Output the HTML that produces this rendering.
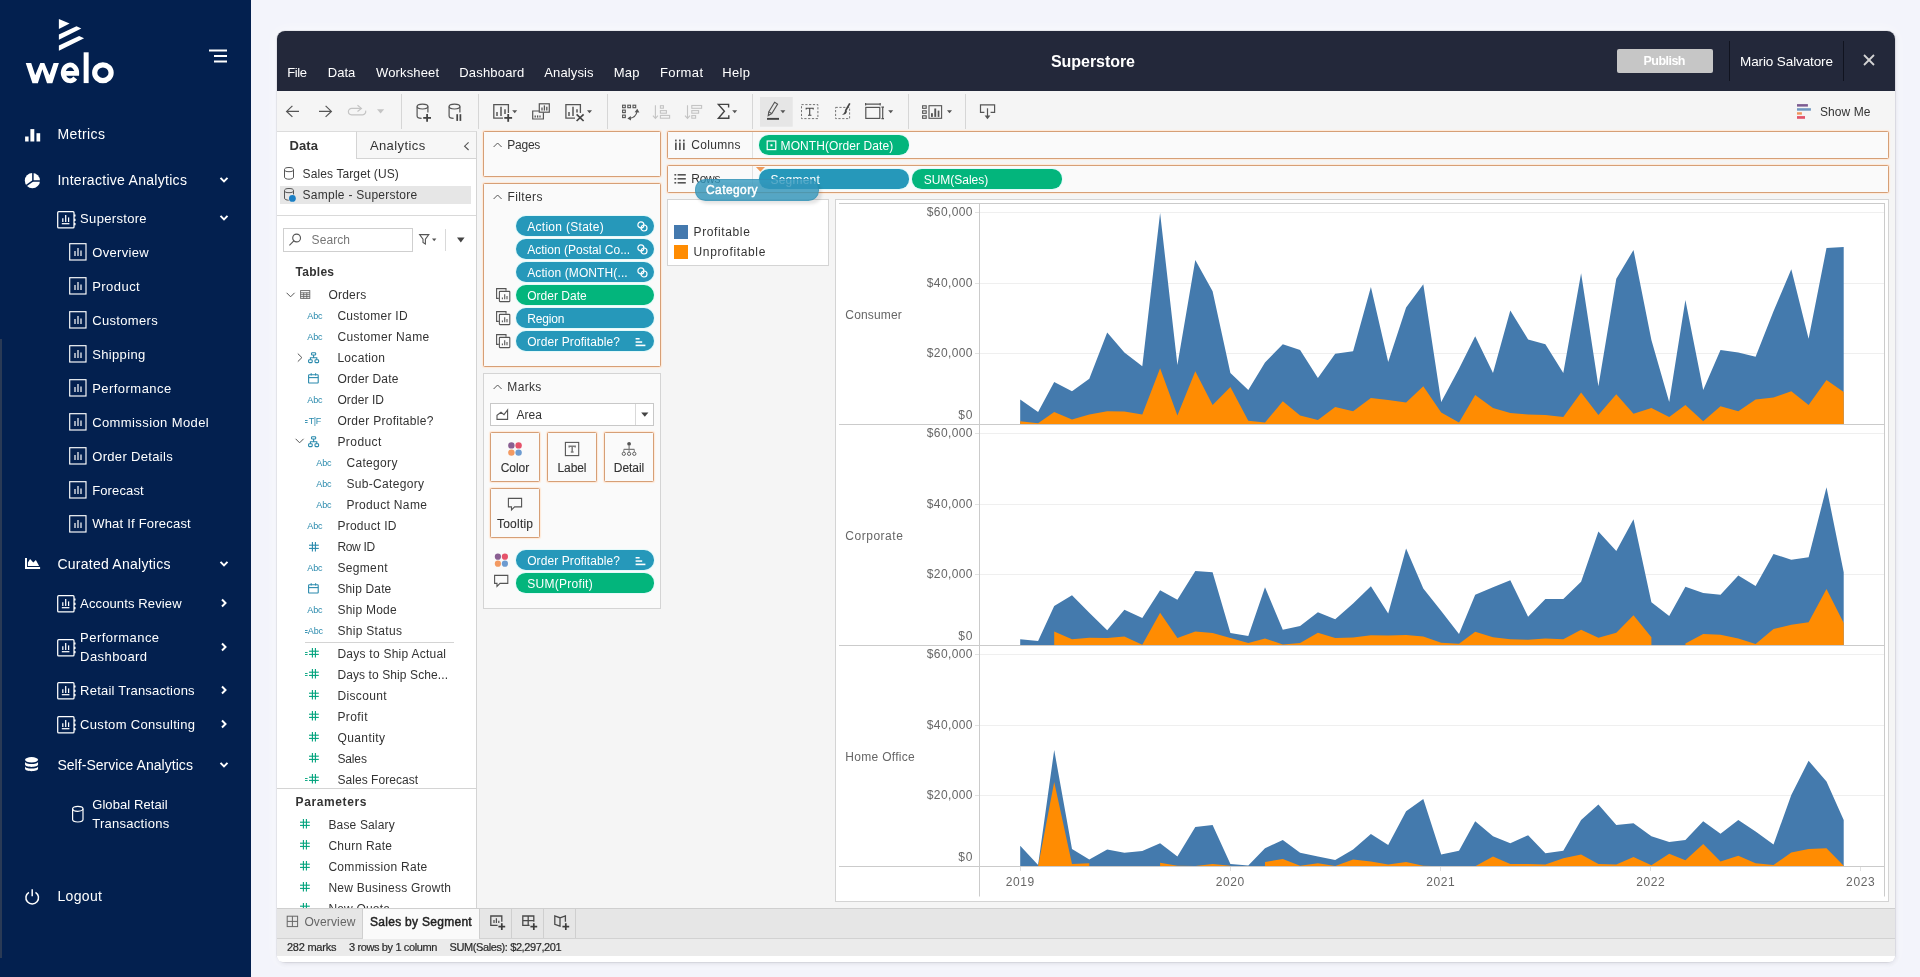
<!DOCTYPE html>
<html><head><meta charset="utf-8"><title>Superstore</title>
<style>
html,body{margin:0;padding:0;}
body{width:1920px;height:977px;overflow:hidden;position:relative;background:#f3f4fb;font-family:"Liberation Sans",sans-serif;}
.b{position:absolute;box-sizing:border-box;display:block;}
.t{position:absolute;white-space:nowrap;display:block;}
svg{overflow:visible;}
</style></head><body><div id="root" style="position:absolute;left:0;top:0;width:1920px;height:977px;will-change:transform;">
<div class="b" style="left:0px;top:0px;width:251px;height:977px;background:#03204f;"></div>
<div class="b" style="left:0px;top:339px;width:2px;height:619px;background:#2a3a55;"></div>
<svg class="b" style="left:0px;top:0px;" width="251" height="100" viewBox="0 0 251 100"><g fill="#fff">
<polygon points="58.9,19 69.6,23.6 58.9,29"/>
<polygon points="58.9,34.6 76.5,26.2 81.3,28.4 58.9,39.7"/>
<polygon points="58.9,45.4 79.1,36 84.1,38.3 58.9,50.8"/>
</g>
<defs><clipPath id="wclip"><rect x="20" y="62.4" width="45" height="20.7"/></clipPath></defs>
<g fill="none" stroke="#fff">
<polygon points="25.73,63.07 31.22,63.07 35.23,75.36 40.31,63.07 44.32,63.07 49.40,75.36 53.58,63.07 58.90,63.07 52.35,83.14 47.03,83.14 42.36,69.13 37.85,83.14 32.45,83.14" fill="#fff" stroke="none"/>
<path d="M63.2,73.3 H76.8 A6.8,7.9 0 1 0 75.2,78" stroke-width="4.7"/>
<line x1="86.15" y1="52.3" x2="86.15" y2="83.1" stroke-width="5"/>
<ellipse cx="102.9" cy="72.7" rx="8.2" ry="7.85" stroke-width="5.2"/>
</g></svg>
<svg class="b" style="left:0px;top:0px;" width="251" height="100" viewBox="0 0 251 100"><g stroke="#fff" stroke-width="2"><line x1="209" y1="50.5" x2="227" y2="50.5"/><line x1="214" y1="56" x2="227" y2="56"/><line x1="214" y1="61.5" x2="227" y2="61.5"/></g></svg>
<svg class="b" style="left:25px;top:128px;" width="16" height="14" viewBox="0 0 16 14"><g fill="#fff"><rect x="0.1" y="8.5" width="3.5" height="5"/><rect x="5.4" y="1.1" width="3.9" height="12.4"/><rect x="11.5" y="5.2" width="3.7" height="8.3"/></g></svg>
<span class="t" style="left:57.40px;top:125.00px;font-size:14px;line-height:18px;color:#fff;letter-spacing:0.415px;">Metrics</span>
<svg class="b" style="left:24px;top:172px;" width="18" height="18" viewBox="0 0 18 18"><circle cx="8.4" cy="8.7" r="7.6" fill="#fff"/><g stroke="#03204f" stroke-width="1.5" fill="none"><polyline points="8.9,0.5 8.9,8.9 16.5,8.9"/><line x1="8.9" y1="8.9" x2="2.2" y2="13.6"/></g></svg>
<span class="t" style="left:57.40px;top:171.00px;font-size:14px;line-height:18px;color:#fff;letter-spacing:0.289px;">Interactive Analytics</span>
<svg class="b" style="left:218.3px;top:175.6px;" width="12" height="8" viewBox="0 0 12 8"><polyline points="2.5,1.9 6,5.4 9.5,1.9" fill="none" stroke="#fff" stroke-width="2"/></svg>
<svg class="b" style="left:56.8px;top:211px;" width="20" height="18" viewBox="0 0 20 18"><rect x="0.7" y="0.7" width="16.3" height="16.2" rx="1" fill="none" stroke="#fff" stroke-width="1.25"/><g stroke="#fff" stroke-width="1.25"><line x1="5.8" y1="7.3" x2="5.8" y2="11"/><line x1="8.7" y1="4" x2="8.7" y2="11"/><line x1="11.6" y1="6.4" x2="11.6" y2="11"/><line x1="4.8" y1="12.7" x2="12.4" y2="12.7"/></g><g stroke="#fff" stroke-width="1.5"><line x1="17.8" y1="3.4" x2="17.8" y2="5.6"/><line x1="17.8" y1="7.7" x2="17.8" y2="9.9"/><line x1="17.8" y1="12" x2="17.8" y2="14.2"/></g></svg>
<span class="t" style="left:80.10px;top:211.00px;font-size:13px;line-height:16px;color:#fff;letter-spacing:0.324px;">Superstore</span>
<svg class="b" style="left:218.3px;top:214.4px;" width="12" height="8" viewBox="0 0 12 8"><polyline points="2.5,1.9 6,5.4 9.5,1.9" fill="none" stroke="#fff" stroke-width="2"/></svg>
<svg class="b" style="left:68.9px;top:243.3px;" width="18" height="18" viewBox="0 0 18 18"><rect x="0.7" y="0.7" width="16.3" height="16.3" fill="none" stroke="#fff" stroke-width="1.15"/><g stroke="#fff" stroke-width="1.2"><line x1="6" y1="8" x2="6" y2="13"/><line x1="9" y1="5" x2="9" y2="13"/><line x1="12" y1="7.5" x2="12" y2="13"/></g></svg>
<span class="t" style="left:92.20px;top:245.00px;font-size:13px;line-height:16px;color:#fff;letter-spacing:0.332px;">Overview</span>
<svg class="b" style="left:68.9px;top:277.3px;" width="18" height="18" viewBox="0 0 18 18"><rect x="0.7" y="0.7" width="16.3" height="16.3" fill="none" stroke="#fff" stroke-width="1.15"/><g stroke="#fff" stroke-width="1.2"><line x1="6" y1="8" x2="6" y2="13"/><line x1="9" y1="5" x2="9" y2="13"/><line x1="12" y1="7.5" x2="12" y2="13"/></g></svg>
<span class="t" style="left:92.20px;top:279.00px;font-size:13px;line-height:16px;color:#fff;letter-spacing:0.450px;">Product</span>
<svg class="b" style="left:68.9px;top:311.3px;" width="18" height="18" viewBox="0 0 18 18"><rect x="0.7" y="0.7" width="16.3" height="16.3" fill="none" stroke="#fff" stroke-width="1.15"/><g stroke="#fff" stroke-width="1.2"><line x1="6" y1="8" x2="6" y2="13"/><line x1="9" y1="5" x2="9" y2="13"/><line x1="12" y1="7.5" x2="12" y2="13"/></g></svg>
<span class="t" style="left:92.20px;top:313.00px;font-size:13px;line-height:16px;color:#fff;letter-spacing:0.332px;">Customers</span>
<svg class="b" style="left:68.9px;top:345.3px;" width="18" height="18" viewBox="0 0 18 18"><rect x="0.7" y="0.7" width="16.3" height="16.3" fill="none" stroke="#fff" stroke-width="1.15"/><g stroke="#fff" stroke-width="1.2"><line x1="6" y1="8" x2="6" y2="13"/><line x1="9" y1="5" x2="9" y2="13"/><line x1="12" y1="7.5" x2="12" y2="13"/></g></svg>
<span class="t" style="left:92.20px;top:347.00px;font-size:13px;line-height:16px;color:#fff;letter-spacing:0.344px;">Shipping</span>
<svg class="b" style="left:68.9px;top:379.3px;" width="18" height="18" viewBox="0 0 18 18"><rect x="0.7" y="0.7" width="16.3" height="16.3" fill="none" stroke="#fff" stroke-width="1.15"/><g stroke="#fff" stroke-width="1.2"><line x1="6" y1="8" x2="6" y2="13"/><line x1="9" y1="5" x2="9" y2="13"/><line x1="12" y1="7.5" x2="12" y2="13"/></g></svg>
<span class="t" style="left:92.20px;top:381.00px;font-size:13px;line-height:16px;color:#fff;letter-spacing:0.459px;">Performance</span>
<svg class="b" style="left:68.9px;top:413.3px;" width="18" height="18" viewBox="0 0 18 18"><rect x="0.7" y="0.7" width="16.3" height="16.3" fill="none" stroke="#fff" stroke-width="1.15"/><g stroke="#fff" stroke-width="1.2"><line x1="6" y1="8" x2="6" y2="13"/><line x1="9" y1="5" x2="9" y2="13"/><line x1="12" y1="7.5" x2="12" y2="13"/></g></svg>
<span class="t" style="left:92.20px;top:415.00px;font-size:13px;line-height:16px;color:#fff;letter-spacing:0.398px;">Commission Model</span>
<svg class="b" style="left:68.9px;top:447.3px;" width="18" height="18" viewBox="0 0 18 18"><rect x="0.7" y="0.7" width="16.3" height="16.3" fill="none" stroke="#fff" stroke-width="1.15"/><g stroke="#fff" stroke-width="1.2"><line x1="6" y1="8" x2="6" y2="13"/><line x1="9" y1="5" x2="9" y2="13"/><line x1="12" y1="7.5" x2="12" y2="13"/></g></svg>
<span class="t" style="left:92.20px;top:449.00px;font-size:13px;line-height:16px;color:#fff;letter-spacing:0.327px;">Order Details</span>
<svg class="b" style="left:68.9px;top:481.3px;" width="18" height="18" viewBox="0 0 18 18"><rect x="0.7" y="0.7" width="16.3" height="16.3" fill="none" stroke="#fff" stroke-width="1.15"/><g stroke="#fff" stroke-width="1.2"><line x1="6" y1="8" x2="6" y2="13"/><line x1="9" y1="5" x2="9" y2="13"/><line x1="12" y1="7.5" x2="12" y2="13"/></g></svg>
<span class="t" style="left:92.20px;top:483.00px;font-size:13px;line-height:16px;color:#fff;letter-spacing:0.133px;">Forecast</span>
<svg class="b" style="left:68.9px;top:514.8px;" width="18" height="18" viewBox="0 0 18 18"><rect x="0.7" y="0.7" width="16.3" height="16.3" fill="none" stroke="#fff" stroke-width="1.15"/><g stroke="#fff" stroke-width="1.2"><line x1="6" y1="8" x2="6" y2="13"/><line x1="9" y1="5" x2="9" y2="13"/><line x1="12" y1="7.5" x2="12" y2="13"/></g></svg>
<span class="t" style="left:92.20px;top:516.00px;font-size:13px;line-height:16px;color:#fff;letter-spacing:0.210px;">What If Forecast</span>
<svg class="b" style="left:24px;top:556px;" width="18" height="16" viewBox="0 0 18 16"><path d="M2,2.1 V12.1 H16.1" fill="none" stroke="#fff" stroke-width="2"/><polygon points="3.9,9.9 3.9,6.5 6.1,2.9 9.3,6.6 11.9,4.1 15.1,9.9" fill="#fff"/></svg>
<span class="t" style="left:57.40px;top:555.00px;font-size:14px;line-height:18px;color:#fff;letter-spacing:0.254px;">Curated Analytics</span>
<svg class="b" style="left:218.3px;top:559.6px;" width="12" height="8" viewBox="0 0 12 8"><polyline points="2.5,1.9 6,5.4 9.5,1.9" fill="none" stroke="#fff" stroke-width="2"/></svg>
<svg class="b" style="left:56.8px;top:595px;" width="20" height="18" viewBox="0 0 20 18"><rect x="0.7" y="0.7" width="16.3" height="16.2" rx="1" fill="none" stroke="#fff" stroke-width="1.25"/><g stroke="#fff" stroke-width="1.25"><line x1="5.8" y1="7.3" x2="5.8" y2="11"/><line x1="8.7" y1="4" x2="8.7" y2="11"/><line x1="11.6" y1="6.4" x2="11.6" y2="11"/><line x1="4.8" y1="12.7" x2="12.4" y2="12.7"/></g><g stroke="#fff" stroke-width="1.5"><line x1="17.8" y1="3.4" x2="17.8" y2="5.6"/><line x1="17.8" y1="7.7" x2="17.8" y2="9.9"/><line x1="17.8" y1="12" x2="17.8" y2="14.2"/></g></svg>
<span class="t" style="left:80.10px;top:596.00px;font-size:13px;line-height:16px;color:#fff;letter-spacing:0.128px;">Accounts Review</span>
<svg class="b" style="left:219.5px;top:597px;" width="8" height="12" viewBox="0 0 8 12"><polyline points="2,2.5 5.5,6 2,9.5" fill="none" stroke="#fff" stroke-width="2"/></svg>
<svg class="b" style="left:56.8px;top:682px;" width="20" height="18" viewBox="0 0 20 18"><rect x="0.7" y="0.7" width="16.3" height="16.2" rx="1" fill="none" stroke="#fff" stroke-width="1.25"/><g stroke="#fff" stroke-width="1.25"><line x1="5.8" y1="7.3" x2="5.8" y2="11"/><line x1="8.7" y1="4" x2="8.7" y2="11"/><line x1="11.6" y1="6.4" x2="11.6" y2="11"/><line x1="4.8" y1="12.7" x2="12.4" y2="12.7"/></g><g stroke="#fff" stroke-width="1.5"><line x1="17.8" y1="3.4" x2="17.8" y2="5.6"/><line x1="17.8" y1="7.7" x2="17.8" y2="9.9"/><line x1="17.8" y1="12" x2="17.8" y2="14.2"/></g></svg>
<span class="t" style="left:80.10px;top:683.00px;font-size:13px;line-height:16px;color:#fff;letter-spacing:0.220px;">Retail Transactions</span>
<svg class="b" style="left:219.5px;top:684px;" width="8" height="12" viewBox="0 0 8 12"><polyline points="2,2.5 5.5,6 2,9.5" fill="none" stroke="#fff" stroke-width="2"/></svg>
<svg class="b" style="left:56.8px;top:716px;" width="20" height="18" viewBox="0 0 20 18"><rect x="0.7" y="0.7" width="16.3" height="16.2" rx="1" fill="none" stroke="#fff" stroke-width="1.25"/><g stroke="#fff" stroke-width="1.25"><line x1="5.8" y1="7.3" x2="5.8" y2="11"/><line x1="8.7" y1="4" x2="8.7" y2="11"/><line x1="11.6" y1="6.4" x2="11.6" y2="11"/><line x1="4.8" y1="12.7" x2="12.4" y2="12.7"/></g><g stroke="#fff" stroke-width="1.5"><line x1="17.8" y1="3.4" x2="17.8" y2="5.6"/><line x1="17.8" y1="7.7" x2="17.8" y2="9.9"/><line x1="17.8" y1="12" x2="17.8" y2="14.2"/></g></svg>
<span class="t" style="left:80.10px;top:717.00px;font-size:13px;line-height:16px;color:#fff;letter-spacing:0.324px;">Custom Consulting</span>
<svg class="b" style="left:219.5px;top:718px;" width="8" height="12" viewBox="0 0 8 12"><polyline points="2,2.5 5.5,6 2,9.5" fill="none" stroke="#fff" stroke-width="2"/></svg>
<svg class="b" style="left:56.8px;top:638.5px;" width="20" height="18" viewBox="0 0 20 18"><rect x="0.7" y="0.7" width="16.3" height="16.2" rx="1" fill="none" stroke="#fff" stroke-width="1.25"/><g stroke="#fff" stroke-width="1.25"><line x1="5.8" y1="7.3" x2="5.8" y2="11"/><line x1="8.7" y1="4" x2="8.7" y2="11"/><line x1="11.6" y1="6.4" x2="11.6" y2="11"/><line x1="4.8" y1="12.7" x2="12.4" y2="12.7"/></g><g stroke="#fff" stroke-width="1.5"><line x1="17.8" y1="3.4" x2="17.8" y2="5.6"/><line x1="17.8" y1="7.7" x2="17.8" y2="9.9"/><line x1="17.8" y1="12" x2="17.8" y2="14.2"/></g></svg>
<span class="t" style="left:80.10px;top:630.00px;font-size:13px;line-height:16px;color:#fff;letter-spacing:0.459px;">Performance</span>
<span class="t" style="left:80.10px;top:649.00px;font-size:13px;line-height:16px;color:#fff;letter-spacing:0.426px;">Dashboard</span>
<svg class="b" style="left:219.5px;top:640.5px;" width="8" height="12" viewBox="0 0 8 12"><polyline points="2,2.5 5.5,6 2,9.5" fill="none" stroke="#fff" stroke-width="2"/></svg>
<svg class="b" style="left:24px;top:756px;" width="18" height="18" viewBox="0 0 18 18"><g fill="#fff"><ellipse cx="7.55" cy="3.8" rx="6.5" ry="2.7"/><path d="M1.05,5.7 C1.05,8.9 14.05,8.9 14.05,5.7 V8.5 C14.05,11.7 1.05,11.7 1.05,8.5 Z"/><path d="M1.05,10.2 C1.05,13.4 14.05,13.4 14.05,10.2 V12.8 C14.05,16 1.05,16 1.05,12.8 Z"/></g></svg>
<span class="t" style="left:57.40px;top:756.00px;font-size:14px;line-height:18px;color:#fff;letter-spacing:0.043px;">Self-Service Analytics</span>
<svg class="b" style="left:218.3px;top:760.6px;" width="12" height="8" viewBox="0 0 12 8"><polyline points="2.5,1.9 6,5.4 9.5,1.9" fill="none" stroke="#fff" stroke-width="2"/></svg>
<svg class="b" style="left:71px;top:804px;" width="14" height="20" viewBox="0 0 14 20"><g fill="none" stroke="#fff" stroke-width="1.2"><ellipse cx="6.8" cy="4.8" rx="5.2" ry="2.5"/><path d="M1.6,4.8 V15.6 C1.6,18.8 12,18.8 12,15.6 V4.8"/></g></svg>
<span class="t" style="left:92.20px;top:797.00px;font-size:13px;line-height:16px;color:#fff;letter-spacing:0.090px;">Global Retail</span>
<span class="t" style="left:92.20px;top:816.00px;font-size:13px;line-height:16px;color:#fff;letter-spacing:0.279px;">Transactions</span>
<svg class="b" style="left:24px;top:888px;" width="18" height="18" viewBox="0 0 18 18"><g fill="none" stroke="#fff" stroke-width="1.5"><path d="M4.9,4.3 A6.3,6.3 0 1 0 11.5,4.3"/><line x1="8.2" y1="1.2" x2="8.2" y2="8.2"/></g></svg>
<span class="t" style="left:57.40px;top:887.00px;font-size:14px;line-height:18px;color:#fff;letter-spacing:0.337px;">Logout</span>
<div class="b" style="left:277px;top:31px;width:1618px;height:931px;background:#f5f5f5;border-radius:8px;box-shadow:0 0 0 1px rgba(0,0,0,0.06),1px 2px 4px rgba(40,40,70,0.12),0 0 14px rgba(255,255,255,0.7);"></div>
<div class="b" style="left:277px;top:31px;width:1618px;height:60px;background:#23283a;border-radius:8px 8px 0 0;"></div>
<span class="t" style="left:287.30px;top:65.00px;font-size:13px;line-height:16px;color:#fff;letter-spacing:-0.415px;">File</span>
<span class="t" style="left:327.80px;top:65.00px;font-size:13px;line-height:16px;color:#fff;letter-spacing:0.014px;">Data</span>
<span class="t" style="left:376.00px;top:65.00px;font-size:13px;line-height:16px;color:#fff;letter-spacing:0.138px;">Worksheet</span>
<span class="t" style="left:459.30px;top:65.00px;font-size:13px;line-height:16px;color:#fff;letter-spacing:0.176px;">Dashboard</span>
<span class="t" style="left:544.30px;top:65.00px;font-size:13px;line-height:16px;color:#fff;letter-spacing:0.113px;">Analysis</span>
<span class="t" style="left:613.70px;top:65.00px;font-size:13px;line-height:16px;color:#fff;letter-spacing:0.256px;">Map</span>
<span class="t" style="left:660.00px;top:65.00px;font-size:13px;line-height:16px;color:#fff;letter-spacing:0.367px;">Format</span>
<span class="t" style="left:722.30px;top:65.00px;font-size:13px;line-height:16px;color:#fff;letter-spacing:0.322px;">Help</span>
<span class="t" style="left:1051.00px;top:52.00px;font-size:16px;line-height:20px;color:#fff;font-weight:bold;letter-spacing:-0.052px;">Superstore</span>
<div class="b" style="left:1617px;top:49px;width:96px;height:24px;background:#c6c6c6;border-radius:2px;"></div>
<span class="t" style="left:1643.50px;top:53.00px;font-size:12.5px;line-height:16px;color:#fff;font-weight:bold;letter-spacing:-0.523px;">Publish</span>
<div class="b" style="left:1729px;top:41px;width:1px;height:40px;background:#10131f;"></div>
<div class="b" style="left:1843px;top:41px;width:1px;height:40px;background:#10131f;"></div>
<span class="t" style="left:1740.00px;top:53.00px;font-size:13.5px;line-height:17px;color:#fff;letter-spacing:-0.110px;">Mario Salvatore</span>
<svg class="b" style="left:1862px;top:53px;" width="14" height="14" viewBox="0 0 14 14"><g stroke="#d4d4d4" stroke-width="1.8"><line x1="2" y1="2" x2="12" y2="12"/><line x1="12" y1="2" x2="2" y2="12"/></g></svg>
<div class="b" style="left:277px;top:91px;width:1618px;height:40px;background:#f5f5f5;"></div>
<div class="b" style="left:401.0px;top:94px;width:1px;height:35px;background:#d6d6d6;"></div>
<div class="b" style="left:478.0px;top:94px;width:1px;height:35px;background:#d6d6d6;"></div>
<div class="b" style="left:607.2px;top:94px;width:1px;height:35px;background:#d6d6d6;"></div>
<div class="b" style="left:752.0px;top:94px;width:1px;height:35px;background:#d6d6d6;"></div>
<div class="b" style="left:907.9px;top:94px;width:1px;height:35px;background:#d6d6d6;"></div>
<div class="b" style="left:964.8px;top:94px;width:1px;height:35px;background:#d6d6d6;"></div>
<svg class="b" style="left:0px;top:0px;" width="1920" height="140" viewBox="0 0 1920 140"><g fill="none" stroke="#555" stroke-width="1.2"><path d="M299,111.4 H286.4 M292.4,105.9 L286.6,111.4 L292.4,116.9"/><path d="M319,111.4 H331.6 M325.6,105.9 L331.4,111.4 L325.6,116.9"/></g><g fill="none" stroke="#c4c4c4" stroke-width="1.2"><path d="M361,108.4 H351.6 A3.2,3.2 0 0 0 351.6,114.8 H362.6 A3.2,3.2 0 0 0 365.6,110.6"/><path d="M357.5,105.3 L361.4,108.4 L357.5,111.4"/></g><polygon points="377,109.2 384.2,109.2 380.6,113.6" fill="#c4c4c4"/><g fill="none" stroke="#555" stroke-width="1.2"><ellipse cx="422.5" cy="106.6" rx="5.4" ry="2.4"/><path d="M417.1,106.6 V116 C417.1,117.4 419.5,118.3 421.6,118.4 M427.9,106.6 V112.6"/></g><g stroke="#444" stroke-width="1.8"><line x1="423.2" y1="117.9" x2="431" y2="117.9"/><line x1="427.1" y1="114" x2="427.1" y2="121.8"/></g><g fill="none" stroke="#555" stroke-width="1.2"><ellipse cx="454.5" cy="106.6" rx="5.4" ry="2.4"/><path d="M449.1,106.6 V116 C449.1,117.4 451.5,118.3 453.6,118.4 M459.9,106.6 V112.6"/></g><g stroke="#444" stroke-width="1.7"><line x1="457.2" y1="114.2" x2="457.2" y2="120.9"/><line x1="460.4" y1="114.2" x2="460.4" y2="120.9"/></g><g fill="none" stroke="#555" stroke-width="1.3"><path d="M503,118.2 H493.8 V104.6 H508.4 V113"/></g><g stroke="#555" stroke-width="1.5"><line x1="497" y1="112" x2="497" y2="116"/><line x1="501" y1="106.8" x2="501" y2="116"/><line x1="505" y1="109.2" x2="505" y2="114"/></g><g stroke="#444" stroke-width="1.8"><line x1="504.3" y1="117.9" x2="512.1" y2="117.9"/><line x1="508.2" y1="114" x2="508.2" y2="121.8"/></g><polygon points="512.2,110.2 517.2,110.2 514.7,113.2" fill="#555"/><g fill="none" stroke="#555" stroke-width="1.2"><rect x="539.3" y="103.8" width="10" height="8.4"/><path d="M539,111 H532.7 V119 H543.4 V112.6"/></g><g stroke="#555" stroke-width="1.3"><line x1="542" y1="107.6" x2="542" y2="110.6"/><line x1="544.4" y1="105.4" x2="544.4" y2="110.6"/><line x1="546.8" y1="106.8" x2="546.8" y2="110.6"/><line x1="535.2" y1="115.4" x2="535.2" y2="117.6"/><line x1="537.6" y1="115.4" x2="537.6" y2="117.6"/><line x1="540" y1="115.4" x2="540" y2="117.6"/></g><g fill="none" stroke="#555" stroke-width="1.3"><path d="M575,118.2 H565.9 V104.6 H580.4 V113"/></g><g stroke="#555" stroke-width="1.5"><line x1="569" y1="112" x2="569" y2="116"/><line x1="573" y1="106.8" x2="573" y2="116"/><line x1="577" y1="109.2" x2="577" y2="112.5"/></g><g stroke="#444" stroke-width="1.7"><line x1="576.6" y1="114.4" x2="583.6" y2="121"/><line x1="583.6" y1="114.4" x2="576.6" y2="121"/></g><polygon points="587,110.2 592,110.2 589.5,113.2" fill="#555"/><g fill="none" stroke="#555" stroke-width="1.1"><rect x="622.6" y="105.2" width="2.7" height="2.5"/><rect x="627.8" y="105.2" width="2.7" height="2.5"/><rect x="633" y="105.2" width="2.7" height="2.5"/><rect x="622.6" y="110.1" width="2.7" height="2.5"/><rect x="622.6" y="115.1" width="2.7" height="2.5"/><path d="M637,111.5 C636.4,115.4 633.6,117.8 629.6,118.4"/></g><polygon points="634.6,112.2 637.3,108.8 639.4,112.4" fill="#555"/><polygon points="630.8,116 627.4,118.6 631,120.6" fill="#555"/><g fill="none" stroke="#c4c4c4" stroke-width="1.1"><path d="M655.4,105.3 V118.2 M652.9,115.6 L655.4,118.4 L657.9,115.6"/><rect x="660.4" y="105.7" width="3" height="2.5"/><rect x="660.4" y="110.6" width="6" height="2.6"/><rect x="660.4" y="115.4" width="9.2" height="2.8"/></g><g fill="none" stroke="#c4c4c4" stroke-width="1.1"><path d="M687.5,105.3 V118.2 M685,115.6 L687.5,118.4 L690,115.6"/><rect x="691.8" y="105.5" width="9.8" height="2.8"/><rect x="691.8" y="110.6" width="6.8" height="2.6"/><rect x="691.8" y="115.6" width="3.8" height="2.6"/></g><path d="M728.6,107.4 V104.4 H718.4 L724.4,111.2 L718.4,118.2 H728.8 V115.2" fill="none" stroke="#444" stroke-width="1.4"/><polygon points="732.2,110.2 737.2,110.2 734.7,113.2" fill="#555"/><rect x="760" y="97" width="32.7" height="29.7" fill="#e6e6e6"/><g fill="none" stroke="#555" stroke-width="1.1"><path d="M774.6,102.3 L777.6,104.1 L771.8,113.6 L768.8,111.8 Z"/><path d="M768.8,111.8 L768.2,115.6 L771.8,113.6"/></g><rect x="767" y="117.9" width="12" height="1.9" fill="#444"/><polygon points="780.4,110.2 785.4,110.2 782.9,113.2" fill="#555"/><rect x="801.5" y="104.6" width="16.4" height="14" fill="none" stroke="#555" stroke-width="1" stroke-dasharray="2.2,1.6" opacity="0.8"/><path d="M806.2,109.6 V108.2 H813.2 V109.6 M809.7,108.2 V115 M808,115.2 H811.4" fill="none" stroke="#444" stroke-width="1.1"/><rect x="835.6" y="107.4" width="14" height="11.2" fill="none" stroke="#555" stroke-width="1" stroke-dasharray="2.2,1.6" opacity="0.8"/><path d="M849.8,103.4 L845.4,111" stroke="#444" stroke-width="1.7" fill="none"/><path d="M845.6,110.4 C844.2,111.6 844.4,113.6 842,114.8 C844.6,115 846.6,113.8 847,111.6 Z" fill="#444"/><g fill="none" stroke="#555" stroke-width="1.2"><rect x="865.8" y="107.4" width="14" height="11"/><path d="M865.4,104.2 H880.4 M865.6,103 V105.6 M880.2,103 V105.6"/><path d="M882.7,107 V118.8 M881.4,107.2 H884 M881.4,118.6 H884"/></g><polygon points="888.2,110.2 893.2,110.2 890.7,113.2" fill="#555"/><g fill="none" stroke="#555" stroke-width="1.1"><rect x="922.6" y="105.8" width="3.6" height="2.5"/><rect x="922.6" y="110.8" width="3.6" height="2.5"/><rect x="922.6" y="115.8" width="3.6" height="2.5"/><rect x="929" y="105.7" width="12.6" height="12.6"/></g><g fill="#555"><rect x="931" y="113.2" width="1.9" height="3.7"/><rect x="934.3" y="108.5" width="1.9" height="8.4"/><rect x="937.7" y="110.6" width="1.7" height="6.3"/></g><polygon points="947,110.2 952,110.2 949.5,113.2" fill="#555"/><path d="M984.4,112.4 H980.5 V104.8 H994.6 V112.4 H990.6" fill="none" stroke="#555" stroke-width="1.2"/><line x1="987.5" y1="108.3" x2="987.5" y2="116.2" stroke="#555" stroke-width="1.2"/><polygon points="984.6,115.6 990.4,115.6 987.5,119.2" fill="#555"/></svg>
<svg class="b" style="left:1796px;top:103px;" width="16" height="17" viewBox="0 0 16 17"><g><rect x="1" y="1.1" width="10.9" height="2.5" fill="#7d5c92"/><rect x="1" y="5.2" width="13.9" height="2.5" fill="#6f97c0"/><rect x="1" y="9.25" width="4.9" height="2.4" fill="#f0935a"/><rect x="1" y="13.1" width="8" height="2.7" fill="#e2546a"/></g></svg>
<span class="t" style="left:1820.00px;top:105.00px;font-size:12px;line-height:15px;color:#333;letter-spacing:0.080px;">Show Me</span>
<div class="b" style="left:277px;top:131px;width:200px;height:777px;background:#fff;border-right:1px solid #d4d4d4;border-top:1px solid #dcdcdc;"></div>
<div class="b" style="left:356px;top:131px;width:121px;height:28px;background:#f7f7f7;border:1px solid #d4d4d4;border-top-color:#dcdcdc;"></div>
<span class="t" style="left:289.50px;top:138.00px;font-size:13px;line-height:16px;color:#333;font-weight:bold;letter-spacing:0.075px;">Data</span>
<span class="t" style="left:369.90px;top:138.00px;font-size:13px;line-height:16px;color:#333;letter-spacing:0.410px;">Analytics</span>
<svg class="b" style="left:462px;top:140px;" width="10" height="12" viewBox="0 0 10 12"><polyline points="6.6,2.4 2.6,6.2 6.6,10" fill="none" stroke="#555" stroke-width="1.1"/></svg>
<svg class="b" style="left:284px;top:167.4px;" width="14" height="16" viewBox="0 0 14 16"><g fill="none" stroke="#555" stroke-width="1"><ellipse cx="5" cy="2.6" rx="4.5" ry="2.1"/><path d="M0.5,2.6 V10.2 C0.5,11.4 2.6,12.2 5,12.2 C7.4,12.2 9.5,11.4 9.5,10.2 V2.6"/></g></svg>
<span class="t" style="left:302.60px;top:167.00px;font-size:12px;line-height:15px;color:#333;letter-spacing:0.108px;">Sales Target (US)</span>
<div class="b" style="left:280px;top:186px;width:191px;height:18px;background:#e6e6e6;"></div>
<svg class="b" style="left:284px;top:188.4px;" width="14" height="16" viewBox="0 0 14 16"><g fill="none" stroke="#555" stroke-width="1"><ellipse cx="5" cy="2.6" rx="4.5" ry="2.1"/><path d="M0.5,2.6 V10.2 C0.5,11.4 2.6,12.2 5,12.2 C7.4,12.2 9.5,11.4 9.5,10.2 V2.6"/></g><circle cx="8.4" cy="10.4" r="4.1" fill="#e6e6e6"/><circle cx="8.4" cy="10.4" r="3.4" fill="#1b7fc4"/></svg>
<span class="t" style="left:302.60px;top:188.00px;font-size:12px;line-height:15px;color:#333;letter-spacing:0.253px;">Sample - Superstore</span>
<div class="b" style="left:277px;top:215px;width:199px;height:1px;background:#d9d9d9;"></div>
<div class="b" style="left:283px;top:228px;width:130px;height:24px;background:#fff;border:1px solid #cfcfcf;"></div>
<svg class="b" style="left:288px;top:232px;" width="16" height="16" viewBox="0 0 16 16"><g fill="none" stroke="#555" stroke-width="1.1"><circle cx="8.6" cy="6" r="3.9"/><line x1="5.8" y1="8.9" x2="1.4" y2="13.4"/></g></svg>
<span class="t" style="left:311.60px;top:233.00px;font-size:12px;line-height:15px;color:#767676;letter-spacing:0.076px;">Search</span>
<svg class="b" style="left:417px;top:232px;" width="24" height="16" viewBox="0 0 24 16"><path d="M2.6,2.6 H11.8 L8.4,7.2 V12 L6,10.4 V7.2 Z" fill="none" stroke="#555" stroke-width="1.1"/><polygon points="15,6.6 19.4,6.6 17.2,9.2" fill="#555"/></svg>
<div class="b" style="left:445px;top:229px;width:1px;height:22px;background:#d9d9d9;"></div>
<svg class="b" style="left:455px;top:236px;" width="12" height="8" viewBox="0 0 12 8"><polygon points="2,1.6 9.6,1.6 5.8,6.4" fill="#444"/></svg>
<span class="t" style="left:295.50px;top:265.00px;font-size:12px;line-height:15px;color:#333;font-weight:bold;letter-spacing:0.276px;">Tables</span>
<svg class="b" style="left:285.6px;top:291.5px;" width="10" height="6" viewBox="0 0 10 6"><polyline points="0.6,0.8 4.6,4.8 8.6,0.8" fill="none" stroke="#555" stroke-width="1"/></svg>
<svg class="b" style="left:300px;top:290.4px;" width="11" height="9" viewBox="0 0 11 9"><g fill="none" stroke="#666" stroke-width="0.9"><rect x="0.6" y="0.6" width="9.2" height="7.8"/><line x1="0.6" y1="2.8" x2="9.8" y2="2.8"/><line x1="0.6" y1="4.7" x2="9.8" y2="4.7"/><line x1="0.6" y1="6.6" x2="9.8" y2="6.6"/><line x1="3.7" y1="2.8" x2="3.7" y2="8.4"/><line x1="6.8" y1="2.8" x2="6.8" y2="8.4"/></g></svg>
<span class="t" style="left:328.40px;top:288.00px;font-size:12px;line-height:15px;color:#333;letter-spacing:0.226px;">Orders</span>
<span class="t" style="left:337.40px;top:309.00px;font-size:12px;line-height:15px;color:#333;letter-spacing:0.286px;">Customer ID</span>
<span class="t" style="left:307.30px;top:311.00px;font-size:9px;line-height:11px;color:#2a8aad;letter-spacing:-0.104px;">Abc</span>
<span class="t" style="left:337.40px;top:330.00px;font-size:12px;line-height:15px;color:#333;letter-spacing:0.371px;">Customer Name</span>
<span class="t" style="left:307.30px;top:332.00px;font-size:9px;line-height:11px;color:#2a8aad;letter-spacing:-0.104px;">Abc</span>
<span class="t" style="left:337.40px;top:351.00px;font-size:12px;line-height:15px;color:#333;letter-spacing:0.305px;">Location</span>
<svg class="b" style="left:307.6px;top:352.09999999999997px;" width="12" height="12" viewBox="0 0 12 12"><g fill="none" stroke="#2a8aad" stroke-width="1.1"><rect x="3.5" y="0.8" width="4.2" height="2.2" rx="0.8"/><rect x="0.6" y="7.8" width="3.6" height="2.8" rx="0.8"/><rect x="7" y="7.8" width="3.6" height="2.8" rx="0.8"/><path d="M5.6,3 V5.7 M2.4,7.8 V5.7 H8.8 V7.8"/></g></svg>
<span class="t" style="left:337.40px;top:372.00px;font-size:12px;line-height:15px;color:#333;letter-spacing:0.183px;">Order Date</span>
<svg class="b" style="left:308.4px;top:373.3px;" width="11" height="11" viewBox="0 0 11 11"><g fill="none" stroke="#2a8aad" stroke-width="1.1"><rect x="0.6" y="1.8" width="9.6" height="8.2" rx="0.6"/><line x1="0.6" y1="4.6" x2="10.2" y2="4.6"/><line x1="3.2" y1="0.2" x2="3.2" y2="2.4"/><line x1="7.6" y1="0.2" x2="7.6" y2="2.4"/></g></svg>
<span class="t" style="left:337.40px;top:393.00px;font-size:12px;line-height:15px;color:#333;letter-spacing:0.085px;">Order ID</span>
<span class="t" style="left:307.30px;top:395.00px;font-size:9px;line-height:11px;color:#2a8aad;letter-spacing:-0.104px;">Abc</span>
<span class="t" style="left:337.40px;top:414.00px;font-size:12px;line-height:15px;color:#333;letter-spacing:0.289px;">Order Profitable?</span>
<svg class="b" style="left:305.0px;top:420px;" width="4" height="4" viewBox="0 0 4 4"><g fill="#2a8aad" opacity="0.9"><rect x="0" y="0" width="2.6" height="1"/><rect x="0" y="2" width="2.6" height="1"/></g></svg>
<span class="t" style="left:308.80px;top:416.00px;font-size:9px;line-height:11px;color:#2a8aad;letter-spacing:-0.466px;">T|F</span>
<span class="t" style="left:337.40px;top:435.00px;font-size:12px;line-height:15px;color:#333;letter-spacing:0.441px;">Product</span>
<svg class="b" style="left:307.6px;top:436.09999999999997px;" width="12" height="12" viewBox="0 0 12 12"><g fill="none" stroke="#2a8aad" stroke-width="1.1"><rect x="3.5" y="0.8" width="4.2" height="2.2" rx="0.8"/><rect x="0.6" y="7.8" width="3.6" height="2.8" rx="0.8"/><rect x="7" y="7.8" width="3.6" height="2.8" rx="0.8"/><path d="M5.6,3 V5.7 M2.4,7.8 V5.7 H8.8 V7.8"/></g></svg>
<span class="t" style="left:346.40px;top:456.00px;font-size:12px;line-height:15px;color:#333;letter-spacing:0.330px;">Category</span>
<span class="t" style="left:316.30px;top:458.00px;font-size:9px;line-height:11px;color:#2a8aad;letter-spacing:-0.104px;">Abc</span>
<span class="t" style="left:346.40px;top:477.00px;font-size:12px;line-height:15px;color:#333;letter-spacing:0.333px;">Sub-Category</span>
<span class="t" style="left:316.30px;top:479.00px;font-size:9px;line-height:11px;color:#2a8aad;letter-spacing:-0.104px;">Abc</span>
<span class="t" style="left:346.40px;top:498.00px;font-size:12px;line-height:15px;color:#333;letter-spacing:0.346px;">Product Name</span>
<span class="t" style="left:316.30px;top:500.00px;font-size:9px;line-height:11px;color:#2a8aad;letter-spacing:-0.104px;">Abc</span>
<span class="t" style="left:337.40px;top:519.00px;font-size:12px;line-height:15px;color:#333;letter-spacing:0.257px;">Product ID</span>
<span class="t" style="left:307.30px;top:521.00px;font-size:9px;line-height:11px;color:#2a8aad;letter-spacing:-0.104px;">Abc</span>
<span class="t" style="left:337.40px;top:540.00px;font-size:12px;line-height:15px;color:#333;letter-spacing:-0.308px;">Row ID</span>
<svg class="b" style="left:309.3px;top:541.5px;" width="11" height="12" viewBox="0 0 11 12"><g stroke="#2a8aad" stroke-width="1.1" fill="none"><line x1="3.4" y1="0" x2="3.4" y2="9.4"/><line x1="6.4" y1="0" x2="6.4" y2="9.4"/><line x1="0" y1="3.2" x2="9.8" y2="3.2"/><line x1="0" y1="6.4" x2="9.8" y2="6.4"/></g></svg>
<span class="t" style="left:337.40px;top:561.00px;font-size:12px;line-height:15px;color:#333;letter-spacing:0.346px;">Segment</span>
<span class="t" style="left:307.30px;top:563.00px;font-size:9px;line-height:11px;color:#2a8aad;letter-spacing:-0.104px;">Abc</span>
<span class="t" style="left:337.40px;top:582.00px;font-size:12px;line-height:15px;color:#333;letter-spacing:0.150px;">Ship Date</span>
<svg class="b" style="left:308.4px;top:583.3000000000001px;" width="11" height="11" viewBox="0 0 11 11"><g fill="none" stroke="#2a8aad" stroke-width="1.1"><rect x="0.6" y="1.8" width="9.6" height="8.2" rx="0.6"/><line x1="0.6" y1="4.6" x2="10.2" y2="4.6"/><line x1="3.2" y1="0.2" x2="3.2" y2="2.4"/><line x1="7.6" y1="0.2" x2="7.6" y2="2.4"/></g></svg>
<span class="t" style="left:337.40px;top:603.00px;font-size:12px;line-height:15px;color:#333;letter-spacing:0.242px;">Ship Mode</span>
<span class="t" style="left:307.30px;top:605.00px;font-size:9px;line-height:11px;color:#2a8aad;letter-spacing:-0.104px;">Abc</span>
<span class="t" style="left:337.40px;top:624.00px;font-size:12px;line-height:15px;color:#333;letter-spacing:0.313px;">Ship Status</span>
<svg class="b" style="left:305.0px;top:630px;" width="4" height="4" viewBox="0 0 4 4"><g fill="#2a8aad" opacity="0.9"><rect x="0" y="0" width="2.6" height="1"/><rect x="0" y="2" width="2.6" height="1"/></g></svg>
<span class="t" style="left:307.80px;top:626.00px;font-size:9px;line-height:11px;color:#2a8aad;letter-spacing:-0.104px;">Abc</span>
<svg class="b" style="left:297px;top:353.0px;" width="6" height="10" viewBox="0 0 6 10"><polyline points="0.8,0.6 4.9,4.6 0.8,8.6" fill="none" stroke="#555" stroke-width="1"/></svg>
<svg class="b" style="left:294.8px;top:438.2px;" width="10" height="6" viewBox="0 0 10 6"><polyline points="0.6,0.8 4.6,4.8 8.6,0.8" fill="none" stroke="#555" stroke-width="1"/></svg>
<div class="b" style="left:305px;top:642px;width:149px;height:1px;background:#d4d4d4;"></div>
<span class="t" style="left:337.40px;top:647.00px;font-size:12px;line-height:15px;color:#333;letter-spacing:0.253px;">Days to Ship Actual</span>
<svg class="b" style="left:309.3px;top:648.4px;" width="11" height="12" viewBox="0 0 11 12"><g stroke="#00a37d" stroke-width="1.1" fill="none"><line x1="3.4" y1="0" x2="3.4" y2="9.4"/><line x1="6.4" y1="0" x2="6.4" y2="9.4"/><line x1="0" y1="3.2" x2="9.8" y2="3.2"/><line x1="0" y1="6.4" x2="9.8" y2="6.4"/></g></svg>
<svg class="b" style="left:305.0px;top:652px;" width="4" height="4" viewBox="0 0 4 4"><g fill="#00a37d" opacity="0.9"><rect x="0" y="0" width="2.6" height="1"/><rect x="0" y="2" width="2.6" height="1"/></g></svg>
<span class="t" style="left:337.40px;top:668.00px;font-size:12px;line-height:15px;color:#333;letter-spacing:0.099px;">Days to Ship Sche...</span>
<svg class="b" style="left:309.3px;top:669.4px;" width="11" height="12" viewBox="0 0 11 12"><g stroke="#00a37d" stroke-width="1.1" fill="none"><line x1="3.4" y1="0" x2="3.4" y2="9.4"/><line x1="6.4" y1="0" x2="6.4" y2="9.4"/><line x1="0" y1="3.2" x2="9.8" y2="3.2"/><line x1="0" y1="6.4" x2="9.8" y2="6.4"/></g></svg>
<svg class="b" style="left:305.0px;top:673px;" width="4" height="4" viewBox="0 0 4 4"><g fill="#00a37d" opacity="0.9"><rect x="0" y="0" width="2.6" height="1"/><rect x="0" y="2" width="2.6" height="1"/></g></svg>
<span class="t" style="left:337.40px;top:689.00px;font-size:12px;line-height:15px;color:#333;letter-spacing:0.373px;">Discount</span>
<svg class="b" style="left:309.3px;top:690.4px;" width="11" height="12" viewBox="0 0 11 12"><g stroke="#00a37d" stroke-width="1.1" fill="none"><line x1="3.4" y1="0" x2="3.4" y2="9.4"/><line x1="6.4" y1="0" x2="6.4" y2="9.4"/><line x1="0" y1="3.2" x2="9.8" y2="3.2"/><line x1="0" y1="6.4" x2="9.8" y2="6.4"/></g></svg>
<span class="t" style="left:337.40px;top:710.00px;font-size:12px;line-height:15px;color:#333;letter-spacing:0.419px;">Profit</span>
<svg class="b" style="left:309.3px;top:711.4px;" width="11" height="12" viewBox="0 0 11 12"><g stroke="#00a37d" stroke-width="1.1" fill="none"><line x1="3.4" y1="0" x2="3.4" y2="9.4"/><line x1="6.4" y1="0" x2="6.4" y2="9.4"/><line x1="0" y1="3.2" x2="9.8" y2="3.2"/><line x1="0" y1="6.4" x2="9.8" y2="6.4"/></g></svg>
<span class="t" style="left:337.40px;top:731.00px;font-size:12px;line-height:15px;color:#333;letter-spacing:0.416px;">Quantity</span>
<svg class="b" style="left:309.3px;top:732.4px;" width="11" height="12" viewBox="0 0 11 12"><g stroke="#00a37d" stroke-width="1.1" fill="none"><line x1="3.4" y1="0" x2="3.4" y2="9.4"/><line x1="6.4" y1="0" x2="6.4" y2="9.4"/><line x1="0" y1="3.2" x2="9.8" y2="3.2"/><line x1="0" y1="6.4" x2="9.8" y2="6.4"/></g></svg>
<span class="t" style="left:337.40px;top:752.00px;font-size:12px;line-height:15px;color:#333;letter-spacing:-0.129px;">Sales</span>
<svg class="b" style="left:309.3px;top:753.4px;" width="11" height="12" viewBox="0 0 11 12"><g stroke="#00a37d" stroke-width="1.1" fill="none"><line x1="3.4" y1="0" x2="3.4" y2="9.4"/><line x1="6.4" y1="0" x2="6.4" y2="9.4"/><line x1="0" y1="3.2" x2="9.8" y2="3.2"/><line x1="0" y1="6.4" x2="9.8" y2="6.4"/></g></svg>
<span class="t" style="left:337.40px;top:773.00px;font-size:12px;line-height:15px;color:#333;letter-spacing:0.059px;">Sales Forecast</span>
<svg class="b" style="left:309.3px;top:774.4px;" width="11" height="12" viewBox="0 0 11 12"><g stroke="#00a37d" stroke-width="1.1" fill="none"><line x1="3.4" y1="0" x2="3.4" y2="9.4"/><line x1="6.4" y1="0" x2="6.4" y2="9.4"/><line x1="0" y1="3.2" x2="9.8" y2="3.2"/><line x1="0" y1="6.4" x2="9.8" y2="6.4"/></g></svg>
<svg class="b" style="left:305.0px;top:778px;" width="4" height="4" viewBox="0 0 4 4"><g fill="#00a37d" opacity="0.9"><rect x="0" y="0" width="2.6" height="1"/><rect x="0" y="2" width="2.6" height="1"/></g></svg>
<div class="b" style="left:277px;top:788px;width:199px;height:1px;background:#d4d4d4;"></div>
<span class="t" style="left:295.50px;top:795.00px;font-size:12px;line-height:15px;color:#333;font-weight:bold;letter-spacing:0.625px;">Parameters</span>
<svg class="b" style="left:299.9px;top:819.1999999999999px;" width="11" height="12" viewBox="0 0 11 12"><g stroke="#00a37d" stroke-width="1.1" fill="none"><line x1="3.4" y1="0" x2="3.4" y2="9.4"/><line x1="6.4" y1="0" x2="6.4" y2="9.4"/><line x1="0" y1="3.2" x2="9.8" y2="3.2"/><line x1="0" y1="6.4" x2="9.8" y2="6.4"/></g></svg>
<span class="t" style="left:328.40px;top:818.00px;font-size:12px;line-height:15px;color:#333;letter-spacing:0.160px;">Base Salary</span>
<svg class="b" style="left:299.9px;top:840.1999999999999px;" width="11" height="12" viewBox="0 0 11 12"><g stroke="#00a37d" stroke-width="1.1" fill="none"><line x1="3.4" y1="0" x2="3.4" y2="9.4"/><line x1="6.4" y1="0" x2="6.4" y2="9.4"/><line x1="0" y1="3.2" x2="9.8" y2="3.2"/><line x1="0" y1="6.4" x2="9.8" y2="6.4"/></g></svg>
<span class="t" style="left:328.40px;top:839.00px;font-size:12px;line-height:15px;color:#333;letter-spacing:0.249px;">Churn Rate</span>
<svg class="b" style="left:299.9px;top:861.1999999999999px;" width="11" height="12" viewBox="0 0 11 12"><g stroke="#00a37d" stroke-width="1.1" fill="none"><line x1="3.4" y1="0" x2="3.4" y2="9.4"/><line x1="6.4" y1="0" x2="6.4" y2="9.4"/><line x1="0" y1="3.2" x2="9.8" y2="3.2"/><line x1="0" y1="6.4" x2="9.8" y2="6.4"/></g></svg>
<span class="t" style="left:328.40px;top:860.00px;font-size:12px;line-height:15px;color:#333;letter-spacing:0.301px;">Commission Rate</span>
<svg class="b" style="left:299.9px;top:882.1999999999999px;" width="11" height="12" viewBox="0 0 11 12"><g stroke="#00a37d" stroke-width="1.1" fill="none"><line x1="3.4" y1="0" x2="3.4" y2="9.4"/><line x1="6.4" y1="0" x2="6.4" y2="9.4"/><line x1="0" y1="3.2" x2="9.8" y2="3.2"/><line x1="0" y1="6.4" x2="9.8" y2="6.4"/></g></svg>
<span class="t" style="left:328.40px;top:881.00px;font-size:12px;line-height:15px;color:#333;letter-spacing:0.248px;">New Business Growth</span>
<div class="b" style="left:277px;top:896px;width:199px;height:12px;overflow:hidden;"><div style="position:absolute;left:-277px;top:-896px;">
<svg class="b" style="left:299.9px;top:903.1999999999999px;" width="11" height="12" viewBox="0 0 11 12"><g stroke="#00a37d" stroke-width="1.1" fill="none"><line x1="3.4" y1="0" x2="3.4" y2="9.4"/><line x1="6.4" y1="0" x2="6.4" y2="9.4"/><line x1="0" y1="3.2" x2="9.8" y2="3.2"/><line x1="0" y1="6.4" x2="9.8" y2="6.4"/></g></svg>
<span class="t" style="left:328.40px;top:902.00px;font-size:12px;line-height:15px;color:#333;letter-spacing:0.184px;">New Quota</span>
</div></div>
<div class="b" style="left:483px;top:131px;width:178px;height:46px;background:#fafafa;border:1px solid #d69f76;border-radius:1.5px;box-shadow:0 0 1px 0.6px #ffe9d8;"></div>
<svg class="b" style="left:492.6px;top:142px;" width="10" height="6" viewBox="0 0 10 6"><polyline points="0.6,5 4.6,1 8.6,5" fill="none" stroke="#555" stroke-width="1"/></svg>
<span class="t" style="left:507.30px;top:138.00px;font-size:12px;line-height:15px;color:#333;letter-spacing:-0.256px;">Pages</span>
<div class="b" style="left:483px;top:183px;width:178px;height:184px;background:#fafafa;border:1px solid #d69f76;border-radius:1.5px;box-shadow:0 0 1px 0.6px #ffe9d8;"></div>
<svg class="b" style="left:492.6px;top:194px;" width="10" height="6" viewBox="0 0 10 6"><polyline points="0.6,5 4.6,1 8.6,5" fill="none" stroke="#555" stroke-width="1"/></svg>
<span class="t" style="left:507.50px;top:190.00px;font-size:12px;line-height:15px;color:#333;letter-spacing:0.389px;">Filters</span>
<div class="b" style="left:515px;top:215px;width:140px;height:21.8px;background:#e4fafa;border-radius:10.9px;"></div>
<div class="b" style="left:516px;top:216px;width:138px;height:19.8px;background:#2698ba;border-radius:9.9px;"></div>
<span class="t" style="left:527.20px;top:220.00px;font-size:12px;line-height:15px;color:#fff;letter-spacing:0.293px;">Action (State)</span>
<svg class="b" style="left:636.6px;top:220.9px;" width="11" height="11" viewBox="0 0 11 11"><g fill="none" stroke="#fff" stroke-width="1.2"><circle cx="3.9" cy="3.9" r="3"/><circle cx="7" cy="7" r="3"/></g></svg>
<div class="b" style="left:515px;top:238px;width:140px;height:21.8px;background:#e4fafa;border-radius:10.9px;"></div>
<div class="b" style="left:516px;top:239px;width:138px;height:19.8px;background:#2698ba;border-radius:9.9px;"></div>
<span class="t" style="left:527.20px;top:243.00px;font-size:12px;line-height:15px;color:#fff;letter-spacing:0.016px;">Action (Postal Co...</span>
<svg class="b" style="left:636.6px;top:243.9px;" width="11" height="11" viewBox="0 0 11 11"><g fill="none" stroke="#fff" stroke-width="1.2"><circle cx="3.9" cy="3.9" r="3"/><circle cx="7" cy="7" r="3"/></g></svg>
<div class="b" style="left:515px;top:261px;width:140px;height:21.8px;background:#e4fafa;border-radius:10.9px;"></div>
<div class="b" style="left:516px;top:262px;width:138px;height:19.8px;background:#2698ba;border-radius:9.9px;"></div>
<span class="t" style="left:527.20px;top:266.00px;font-size:12px;line-height:15px;color:#fff;letter-spacing:0.114px;">Action (MONTH(...</span>
<svg class="b" style="left:636.6px;top:266.9px;" width="11" height="11" viewBox="0 0 11 11"><g fill="none" stroke="#fff" stroke-width="1.2"><circle cx="3.9" cy="3.9" r="3"/><circle cx="7" cy="7" r="3"/></g></svg>
<div class="b" style="left:515px;top:284px;width:140px;height:21.8px;background:#e4fafa;border-radius:10.9px;"></div>
<div class="b" style="left:516px;top:285px;width:138px;height:19.8px;background:#03b57c;border-radius:9.9px;"></div>
<span class="t" style="left:527.20px;top:289.00px;font-size:12px;line-height:15px;color:#fff;letter-spacing:0.028px;">Order Date</span>
<svg class="b" style="left:495.8px;top:288px;" width="15" height="15" viewBox="0 0 15 15"><g fill="none" stroke="#555" stroke-width="1.1"><path d="M2.8,10.4 H0.6 V0.6 H10 V2.8"/><rect x="3.4" y="3.4" width="10.4" height="10.2" rx="0.6"/></g><g stroke="#555" stroke-width="1.1"><line x1="6.4" y1="9.6" x2="6.4" y2="11.2"/><line x1="8.7" y1="6.2" x2="8.7" y2="11.2"/><line x1="11" y1="8" x2="11" y2="11.2"/></g></svg>
<div class="b" style="left:515px;top:307px;width:140px;height:21.8px;background:#e4fafa;border-radius:10.9px;"></div>
<div class="b" style="left:516px;top:308px;width:138px;height:19.8px;background:#2698ba;border-radius:9.9px;"></div>
<span class="t" style="left:527.20px;top:312.00px;font-size:12px;line-height:15px;color:#fff;letter-spacing:-0.165px;">Region</span>
<svg class="b" style="left:495.8px;top:311px;" width="15" height="15" viewBox="0 0 15 15"><g fill="none" stroke="#555" stroke-width="1.1"><path d="M2.8,10.4 H0.6 V0.6 H10 V2.8"/><rect x="3.4" y="3.4" width="10.4" height="10.2" rx="0.6"/></g><g stroke="#555" stroke-width="1.1"><line x1="6.4" y1="9.6" x2="6.4" y2="11.2"/><line x1="8.7" y1="6.2" x2="8.7" y2="11.2"/><line x1="11" y1="8" x2="11" y2="11.2"/></g></svg>
<div class="b" style="left:515px;top:330px;width:140px;height:21.8px;background:#e4fafa;border-radius:10.9px;"></div>
<div class="b" style="left:516px;top:331px;width:138px;height:19.8px;background:#2698ba;border-radius:9.9px;"></div>
<span class="t" style="left:527.20px;top:335.00px;font-size:12px;line-height:15px;color:#fff;letter-spacing:0.089px;">Order Profitable?</span>
<svg class="b" style="left:495.8px;top:334px;" width="15" height="15" viewBox="0 0 15 15"><g fill="none" stroke="#555" stroke-width="1.1"><path d="M2.8,10.4 H0.6 V0.6 H10 V2.8"/><rect x="3.4" y="3.4" width="10.4" height="10.2" rx="0.6"/></g><g stroke="#555" stroke-width="1.1"><line x1="6.4" y1="9.6" x2="6.4" y2="11.2"/><line x1="8.7" y1="6.2" x2="8.7" y2="11.2"/><line x1="11" y1="8" x2="11" y2="11.2"/></g></svg>
<svg class="b" style="left:634.6px;top:336.6px;" width="11" height="10" viewBox="0 0 11 10"><g fill="#fff"><rect x="0.6" y="7.6" width="9.8" height="1.6"/><rect x="0.6" y="4.3" width="6.6" height="1.5"/><rect x="0.6" y="1" width="4" height="1.5"/></g></svg>
<div class="b" style="left:483px;top:373px;width:178px;height:236px;background:#fafafa;border:1px solid #d4d4d4;"></div>
<svg class="b" style="left:492.6px;top:384px;" width="10" height="6" viewBox="0 0 10 6"><polyline points="0.6,5 4.6,1 8.6,5" fill="none" stroke="#555" stroke-width="1"/></svg>
<span class="t" style="left:507.30px;top:380.00px;font-size:12px;line-height:15px;color:#333;letter-spacing:0.334px;">Marks</span>
<div class="b" style="left:490px;top:403px;width:164px;height:23px;background:#fff;border:1px solid #c8c8c8;"></div>
<div class="b" style="left:635px;top:404px;width:1px;height:21px;background:#d9d9d9;"></div>
<svg class="b" style="left:496px;top:408px;" width="14" height="13" viewBox="0 0 14 13"><path d="M1,11.4 V7.2 L5,4.2 L8,6.6 L11.6,1.8 V11.4 Z" fill="none" stroke="#555" stroke-width="1.1"/></svg>
<span class="t" style="left:516.40px;top:408.00px;font-size:12px;line-height:15px;color:#333;letter-spacing:0.085px;">Area</span>
<svg class="b" style="left:640px;top:411px;" width="10" height="8" viewBox="0 0 10 8"><polygon points="1.2,1.4 8.4,1.4 4.8,5.8" fill="#444"/></svg>
<div class="b" style="left:490px;top:432px;width:50px;height:50px;background:#fafafa;border:1px solid #d69f76;border-radius:1.5px;box-shadow:0 0 1px 0.6px #ffe9d8;"></div>
<span class="t" style="left:500.75px;top:461.00px;font-size:12px;line-height:15px;color:#333;letter-spacing:-0.044px;-webkit-text-stroke:0.12px #333;">Color</span>
<svg class="b" style="left:505px;top:439px;" width="20" height="20" viewBox="0 0 20 20"><circle cx="6.4" cy="6.4" r="3.2" fill="#8a5f92"/><circle cx="13.6" cy="6.4" r="3.2" fill="#e6526a"/><circle cx="6.4" cy="13.6" r="3.2" fill="#f39a62"/><circle cx="13.6" cy="13.6" r="3.2" fill="#6d9bd0"/></svg>
<div class="b" style="left:547px;top:432px;width:50px;height:50px;background:#fafafa;border:1px solid #d69f76;border-radius:1.5px;box-shadow:0 0 1px 0.6px #ffe9d8;"></div>
<span class="t" style="left:557.50px;top:461.00px;font-size:12px;line-height:15px;color:#333;letter-spacing:-0.090px;-webkit-text-stroke:0.12px #333;">Label</span>
<svg class="b" style="left:563px;top:440px;" width="18" height="18" viewBox="0 0 18 18"><rect x="2.4" y="2.4" width="13.3" height="13.2" fill="none" stroke="#555" stroke-width="1.1"/><path d="M6.2,7.6 V6.3 H12.2 V7.6 M9.2,6.3 V12 M7.8,12.1 H10.6" fill="none" stroke="#7a7a7a" stroke-width="1.5"/></svg>
<div class="b" style="left:604px;top:432px;width:50px;height:50px;background:#fafafa;border:1px solid #d69f76;border-radius:1.5px;box-shadow:0 0 1px 0.6px #ffe9d8;"></div>
<span class="t" style="left:613.75px;top:461.00px;font-size:12px;line-height:15px;color:#333;letter-spacing:-0.036px;-webkit-text-stroke:0.12px #333;">Detail</span>
<svg class="b" style="left:620px;top:440px;" width="18" height="18" viewBox="0 0 18 18"><circle cx="9.1" cy="3.8" r="1.9" fill="#555"/><g fill="none" stroke="#7a7a7a" stroke-width="1.2"><path d="M9.1,5.6 V9.4 M3.8,9.4 H14.4"/><path d="M3.8,9.4 V12 M9.1,9.4 V12 M14.3,9.4 V12" stroke-width="0.9"/></g><g fill="none" stroke="#5a5a5a" stroke-width="0.95"><circle cx="3.8" cy="13.8" r="1.65"/><circle cx="9.1" cy="13.8" r="1.65"/><circle cx="14.3" cy="13.8" r="1.65"/></g></svg>
<div class="b" style="left:490px;top:488px;width:50px;height:50px;background:#fafafa;border:1px solid #d69f76;border-radius:1.5px;box-shadow:0 0 1px 0.6px #ffe9d8;"></div>
<span class="t" style="left:497.00px;top:517.00px;font-size:12px;line-height:15px;color:#333;letter-spacing:0.219px;-webkit-text-stroke:0.12px #333;">Tooltip</span>
<svg class="b" style="left:506px;top:496px;" width="18" height="16" viewBox="0 0 18 16"><path d="M2.4,2.4 H15.6 V10.9 H8.6 L5.5,13.9 V10.9 H2.4 Z" fill="none" stroke="#555" stroke-width="1.1"/></svg>
<div class="b" style="left:515.3px;top:549.3px;width:139.6px;height:21.7px;background:#e4fafa;border-radius:10.85px;"></div>
<div class="b" style="left:516.3px;top:550.3px;width:137.6px;height:19.7px;background:#2698ba;border-radius:9.85px;"></div>
<span class="t" style="left:527.20px;top:554.00px;font-size:12px;line-height:15px;color:#fff;letter-spacing:0.089px;">Order Profitable?</span>
<svg class="b" style="left:634.6px;top:555.8px;" width="11" height="10" viewBox="0 0 11 10"><g fill="#fff"><rect x="0.6" y="7.6" width="9.8" height="1.6"/><rect x="0.6" y="4.3" width="6.6" height="1.5"/><rect x="0.6" y="1" width="4" height="1.5"/></g></svg>
<svg class="b" style="left:493px;top:551px;" width="18" height="18" viewBox="0 0 18 18"><circle cx="4.9" cy="5.699999999999999" r="3.1" fill="#8a5f92"/><circle cx="11.9" cy="5.699999999999999" r="3.1" fill="#e6526a"/><circle cx="4.9" cy="12.7" r="3.1" fill="#f39a62"/><circle cx="11.9" cy="12.7" r="3.1" fill="#6d9bd0"/></svg>
<div class="b" style="left:515.3px;top:572.3px;width:139.6px;height:21.4px;background:#e4fafa;border-radius:10.7px;"></div>
<div class="b" style="left:516.3px;top:573.3px;width:137.6px;height:19.4px;background:#03b57c;border-radius:9.7px;"></div>
<span class="t" style="left:527.20px;top:577.00px;font-size:12px;line-height:15px;color:#fff;letter-spacing:0.284px;">SUM(Profit)</span>
<svg class="b" style="left:493px;top:574px;" width="18" height="16" viewBox="0 0 18 16"><path d="M1.6,1.4 H14.8 V9.4 H7 L4,12.4 V9.4 H1.6 Z" fill="none" stroke="#555" stroke-width="1.1"/></svg>
<div class="b" style="left:667px;top:131px;width:1222px;height:28px;background:#fafafa;border:1px solid #d69f76;border-radius:1.5px;box-shadow:0 0 1px 0.6px #ffe9d8;"></div>
<div class="b" style="left:752px;top:132px;width:1px;height:26px;background:#e0e0e0;"></div>
<div class="b" style="left:667px;top:165px;width:1222px;height:28px;background:#fafafa;border:1px solid #d69f76;border-radius:1.5px;box-shadow:0 0 1px 0.6px #ffe9d8;"></div>
<div class="b" style="left:752px;top:166px;width:1px;height:26px;background:#e0e0e0;"></div>
<svg class="b" style="left:674px;top:139px;" width="12" height="12" viewBox="0 0 12 12"><g fill="#555"><rect x="1" y="0.6" width="1.7" height="1.8"/><rect x="5" y="0.6" width="1.7" height="1.8"/><rect x="9" y="0.6" width="1.7" height="1.8"/><rect x="1" y="3.6" width="1.7" height="7.4"/><rect x="5" y="3.6" width="1.7" height="7.4"/><rect x="9" y="3.6" width="1.7" height="7.4"/></g></svg>
<span class="t" style="left:691.30px;top:138.00px;font-size:12px;line-height:15px;color:#333;letter-spacing:0.325px;">Columns</span>
<svg class="b" style="left:674px;top:173px;" width="13" height="12" viewBox="0 0 13 12"><g fill="#555"><rect x="0.4" y="1" width="1.8" height="1.6"/><rect x="0.4" y="5" width="1.8" height="1.6"/><rect x="0.4" y="9" width="1.8" height="1.6"/><rect x="3.6" y="1" width="8.2" height="1.6"/><rect x="3.6" y="5" width="8.2" height="1.6"/><rect x="3.6" y="9" width="8.2" height="1.6"/></g></svg>
<span class="t" style="left:691.30px;top:172.00px;font-size:12px;line-height:15px;color:#333;letter-spacing:-0.269px;">Rows</span>
<div class="b" style="left:757.5px;top:134.2px;width:152.5px;height:21.6px;background:#e4fafa;border-radius:10.8px;"></div>
<div class="b" style="left:758.5px;top:135.2px;width:150.5px;height:19.6px;background:#03b57c;border-radius:9.8px;"></div>
<span class="t" style="left:780.60px;top:139.00px;font-size:12px;line-height:15px;color:#fff;letter-spacing:0.085px;">MONTH(Order Date)</span>
<svg class="b" style="left:765.5px;top:140px;" width="11" height="11" viewBox="0 0 11 11"><rect x="1.2" y="1" width="8.6" height="8.6" fill="none" stroke="#fff" stroke-width="1.2"/><rect x="4.5" y="4.3" width="2" height="2" fill="#fff"/></svg>
<div class="b" style="left:757.5px;top:168.2px;width:152.5px;height:21.6px;background:#e4fafa;border-radius:10.8px;"></div>
<div class="b" style="left:758.5px;top:169.2px;width:150.5px;height:19.6px;background:#2698ba;border-radius:9.8px;"></div>
<span class="t" style="left:770.50px;top:173.00px;font-size:12px;line-height:15px;color:#fff;letter-spacing:0.212px;">Segment</span>
<div class="b" style="left:910.6px;top:168.2px;width:152.6px;height:21.6px;background:#e4fafa;border-radius:10.8px;"></div>
<div class="b" style="left:911.6px;top:169.2px;width:150.6px;height:19.6px;background:#03b57c;border-radius:9.8px;"></div>
<span class="t" style="left:923.70px;top:173.00px;font-size:12px;line-height:15px;color:#fff;letter-spacing:-0.019px;">SUM(Sales)</span>
<svg class="b" style="left:755px;top:166px;" width="12" height="8" viewBox="0 0 12 8"><polygon points="0.9,1 10,1 5.4,5.8" fill="#ee9b5c"/></svg>
<div class="b" style="left:667px;top:199px;width:162px;height:67px;background:#fff;border:1px solid #d4d4d4;"></div>
<div class="b" style="left:674px;top:225.3px;width:14px;height:13.6px;background:#4479ae;"></div>
<div class="b" style="left:674px;top:245px;width:14px;height:13.6px;background:#ff8c02;"></div>
<span class="t" style="left:693.50px;top:225.00px;font-size:12px;line-height:15px;color:#333;letter-spacing:0.623px;">Profitable</span>
<span class="t" style="left:693.50px;top:245.00px;font-size:12px;line-height:15px;color:#333;letter-spacing:0.645px;">Unprofitable</span>
<div class="b" style="left:835px;top:199px;width:1054px;height:703px;background:#fff;border:1px solid #d4d4d4;"></div>
<svg class="b" style="left:0px;top:0px;" width="1920" height="977" viewBox="0 0 1920 977"><line x1="980" y1="353.50" x2="1884.5" y2="353.50" stroke="#efefef" stroke-width="1"/><line x1="980" y1="283.50" x2="1884.5" y2="283.50" stroke="#efefef" stroke-width="1"/><line x1="980" y1="212.50" x2="1884.5" y2="212.50" stroke="#efefef" stroke-width="1"/><line x1="980" y1="574.50" x2="1884.5" y2="574.50" stroke="#efefef" stroke-width="1"/><line x1="980" y1="504.50" x2="1884.5" y2="504.50" stroke="#efefef" stroke-width="1"/><line x1="980" y1="433.50" x2="1884.5" y2="433.50" stroke="#efefef" stroke-width="1"/><line x1="980" y1="795.50" x2="1884.5" y2="795.50" stroke="#efefef" stroke-width="1"/><line x1="980" y1="725.50" x2="1884.5" y2="725.50" stroke="#efefef" stroke-width="1"/><line x1="980" y1="654.50" x2="1884.5" y2="654.50" stroke="#efefef" stroke-width="1"/><polygon points="1020.2,424.3 1020.2,399.50 1038.1,412.00 1054.2,382.00 1072.0,391.25 1089.3,378.75 1107.2,332.50 1124.4,352.50 1142.3,366.25 1160.1,213.00 1177.4,365.00 1195.3,260.00 1212.6,291.25 1230.4,373.00 1248.3,390.00 1265.0,362.50 1282.8,344.25 1300.1,350.00 1317.9,378.00 1335.2,353.75 1353.1,351.25 1370.9,287.00 1388.2,362.00 1406.1,307.50 1423.3,284.25 1441.2,402.00 1459.0,368.75 1475.2,336.25 1493.0,373.00 1510.3,310.50 1528.1,339.50 1545.4,344.25 1563.3,373.00 1581.1,273.25 1598.4,386.25 1616.3,278.75 1633.5,250.00 1651.4,340.00 1669.2,402.00 1685.4,300.00 1703.2,390.00 1720.5,350.00 1738.3,352.50 1755.6,356.75 1773.5,311.25 1791.3,269.25 1808.6,338.75 1826.5,248.00 1843.7,247.00 1843.7,424.3" fill="#447aad"/><polygon points="1020.2,424.3 1020.2,421.25 1038.1,423.25 1054.2,412.00 1072.0,419.50 1089.3,414.50 1107.2,411.25 1124.4,411.50 1142.3,414.50 1160.1,368.25 1177.4,415.50 1195.3,371.25 1212.6,405.00 1230.4,387.00 1248.3,420.75 1265.0,422.50 1282.8,401.25 1300.1,415.50 1317.9,420.00 1335.2,407.00 1353.1,411.25 1370.9,398.00 1388.2,400.00 1406.1,402.50 1423.3,386.25 1441.2,412.50 1459.0,422.50 1475.2,395.00 1493.0,408.00 1510.3,413.00 1528.1,414.50 1545.4,415.00 1563.3,417.00 1581.1,392.50 1598.4,415.00 1616.3,394.25 1633.5,413.75 1651.4,408.00 1669.2,417.00 1685.4,405.00 1703.2,421.25 1720.5,406.25 1738.3,411.25 1755.6,399.50 1773.5,397.50 1791.3,391.25 1808.6,405.00 1826.5,380.00 1843.7,392.00 1843.7,424.3" fill="#ff8c02"/><polygon points="1020.2,645.3 1020.2,639.25 1038.1,641.00 1054.2,606.00 1072.0,595.25 1089.3,612.75 1107.2,630.25 1124.4,609.75 1142.3,618.00 1160.1,590.25 1177.4,599.75 1195.3,571.00 1212.6,572.25 1230.4,633.00 1248.3,636.00 1265.0,587.25 1282.8,629.75 1300.1,626.00 1317.9,612.25 1335.2,619.25 1353.1,603.50 1370.9,586.25 1388.2,613.50 1406.1,548.50 1423.3,588.50 1441.2,611.00 1459.0,634.00 1475.2,594.75 1493.0,587.25 1510.3,580.25 1528.1,616.75 1545.4,599.00 1563.3,599.00 1581.1,581.75 1598.4,531.50 1616.3,551.00 1633.5,519.25 1651.4,602.25 1669.2,616.00 1685.4,586.75 1703.2,593.00 1720.5,594.75 1738.3,575.50 1755.6,586.00 1773.5,554.00 1791.3,559.75 1808.6,557.25 1826.5,487.25 1843.7,572.25 1843.7,645.3" fill="#447aad"/><polygon points="1054.2,645.3 1054.2,631.50 1072.0,639.25 1089.3,637.75 1107.2,638.00 1124.4,636.50 1142.3,644.75 1160.1,612.75 1177.4,638.00 1195.3,631.50 1212.6,633.00 1230.4,638.00 1248.3,643.00 1265.0,638.50 1282.8,644.50 1300.1,643.00 1317.9,632.75 1335.2,638.00 1353.1,637.50 1370.9,635.25 1388.2,635.50 1406.1,635.00 1423.3,636.50 1441.2,642.75 1459.0,643.75 1475.2,631.75 1493.0,637.25 1510.3,639.25 1528.1,639.75 1545.4,638.50 1563.3,639.25 1581.1,629.75 1598.4,637.75 1616.3,632.75 1633.5,615.25 1651.4,637.25 1651.4,645.3" fill="#ff8c02"/><polygon points="1685.4,645.3 1685.4,643.50 1703.2,634.00 1720.5,634.75 1738.3,638.50 1755.6,644.00 1773.5,629.00 1791.3,624.75 1808.6,622.25 1826.5,589.00 1843.7,623.00 1843.7,645.3" fill="#ff8c02"/><polygon points="1020.2,866.3 1020.2,845.75 1038.1,865.00 1054.2,750.00 1072.0,849.00 1089.3,859.50 1107.2,849.50 1124.4,852.75 1142.3,851.00 1160.1,843.25 1177.4,856.50 1195.3,827.00 1212.6,825.00 1230.4,864.00 1248.3,865.50 1265.0,848.25 1282.8,840.00 1300.1,852.75 1317.9,856.50 1335.2,860.00 1353.1,849.50 1370.9,834.00 1388.2,845.00 1406.1,811.25 1423.3,799.00 1441.2,854.50 1459.0,850.75 1475.2,821.25 1493.0,836.25 1510.3,843.25 1528.1,835.25 1545.4,853.25 1563.3,850.75 1581.1,820.00 1598.4,804.50 1616.3,825.00 1633.5,823.25 1651.4,836.25 1669.2,842.00 1685.4,840.00 1703.2,821.25 1720.5,833.75 1738.3,820.00 1755.6,831.50 1773.5,844.50 1791.3,795.00 1808.6,760.75 1826.5,781.50 1843.7,820.00 1843.7,866.3" fill="#447aad"/><polygon points="1038.1,866.3 1038.1,866.25 1054.2,782.00 1072.0,864.00 1089.3,863.25 1089.3,866.3" fill="#ff8c02"/><polygon points="1160.1,866.3 1160.1,862.75 1177.4,865.75 1195.3,866.00 1212.6,864.00 1230.4,865.75 1230.4,866.3" fill="#ff8c02"/><polygon points="1265.0,866.3 1265.0,862.00 1282.8,859.00 1300.1,865.75 1317.9,863.25 1335.2,866.00 1353.1,859.50 1370.9,861.50 1388.2,864.50 1406.1,862.00 1423.3,865.75 1441.2,866.25 1441.2,866.3" fill="#ff8c02"/><polygon points="1475.2,866.3 1475.2,866.25 1493.0,856.50 1510.3,864.00 1528.1,864.00 1545.4,864.50 1563.3,858.25 1581.1,854.50 1598.4,864.00 1616.3,864.50 1633.5,857.00 1651.4,865.25 1669.2,853.75 1685.4,860.25 1703.2,844.00 1720.5,861.50 1738.3,855.75 1755.6,863.25 1773.5,865.00 1791.3,852.50 1808.6,849.00 1826.5,848.25 1843.7,865.75 1843.7,866.3" fill="#ff8c02"/><line x1="839" y1="203.5" x2="1885" y2="203.5" stroke="#cbcbcb"/><line x1="1884.5" y1="203" x2="1884.5" y2="896.5" stroke="#cbcbcb"/><line x1="979.5" y1="203" x2="979.5" y2="896.5" stroke="#cbcbcb"/><line x1="839" y1="424.5" x2="1885" y2="424.5" stroke="#cbcbcb"/><line x1="839" y1="645.5" x2="1885" y2="645.5" stroke="#cbcbcb"/><line x1="839" y1="866.5" x2="1885" y2="866.5" stroke="#cbcbcb"/><line x1="975" y1="353.50" x2="979" y2="353.50" stroke="#e2e2e2"/><line x1="975" y1="283.50" x2="979" y2="283.50" stroke="#e2e2e2"/><line x1="975" y1="212.50" x2="979" y2="212.50" stroke="#e2e2e2"/><line x1="975" y1="574.50" x2="979" y2="574.50" stroke="#e2e2e2"/><line x1="975" y1="504.50" x2="979" y2="504.50" stroke="#e2e2e2"/><line x1="975" y1="433.50" x2="979" y2="433.50" stroke="#e2e2e2"/><line x1="975" y1="795.50" x2="979" y2="795.50" stroke="#e2e2e2"/><line x1="975" y1="725.50" x2="979" y2="725.50" stroke="#e2e2e2"/><line x1="975" y1="654.50" x2="979" y2="654.50" stroke="#e2e2e2"/><line x1="1020.5" y1="867" x2="1020.5" y2="871" stroke="#e2e2e2"/><line x1="1230.5" y1="867" x2="1230.5" y2="871" stroke="#e2e2e2"/><line x1="1440.5" y1="867" x2="1440.5" y2="871" stroke="#e2e2e2"/><line x1="1650.5" y1="867" x2="1650.5" y2="871" stroke="#e2e2e2"/><line x1="1860.5" y1="867" x2="1860.5" y2="871" stroke="#e2e2e2"/></svg>
<span class="t" style="left:845.30px;top:308.00px;font-size:12px;line-height:15px;color:#666;letter-spacing:0.164px;">Consumer</span>
<span class="t" style="left:926.80px;top:205.00px;font-size:12px;line-height:15px;color:#666;letter-spacing:0.388px;">$60,000</span>
<span class="t" style="left:926.80px;top:276.00px;font-size:12px;line-height:15px;color:#666;letter-spacing:0.388px;">$40,000</span>
<span class="t" style="left:926.80px;top:346.00px;font-size:12px;line-height:15px;color:#666;letter-spacing:0.388px;">$20,000</span>
<span class="t" style="left:958.20px;top:408.00px;font-size:12px;line-height:15px;color:#666;letter-spacing:0.954px;">$0</span>
<span class="t" style="left:845.30px;top:529.00px;font-size:12px;line-height:15px;color:#666;letter-spacing:0.518px;">Corporate</span>
<span class="t" style="left:926.80px;top:426.00px;font-size:12px;line-height:15px;color:#666;letter-spacing:0.388px;">$60,000</span>
<span class="t" style="left:926.80px;top:497.00px;font-size:12px;line-height:15px;color:#666;letter-spacing:0.388px;">$40,000</span>
<span class="t" style="left:926.80px;top:567.00px;font-size:12px;line-height:15px;color:#666;letter-spacing:0.388px;">$20,000</span>
<span class="t" style="left:958.20px;top:629.00px;font-size:12px;line-height:15px;color:#666;letter-spacing:0.954px;">$0</span>
<span class="t" style="left:845.30px;top:750.00px;font-size:12px;line-height:15px;color:#666;letter-spacing:0.303px;">Home Office</span>
<span class="t" style="left:926.80px;top:647.00px;font-size:12px;line-height:15px;color:#666;letter-spacing:0.388px;">$60,000</span>
<span class="t" style="left:926.80px;top:718.00px;font-size:12px;line-height:15px;color:#666;letter-spacing:0.388px;">$40,000</span>
<span class="t" style="left:926.80px;top:788.00px;font-size:12px;line-height:15px;color:#666;letter-spacing:0.388px;">$20,000</span>
<span class="t" style="left:958.20px;top:850.00px;font-size:12px;line-height:15px;color:#666;letter-spacing:0.954px;">$0</span>
<span class="t" style="left:1005.75px;top:875.00px;font-size:12px;line-height:15px;color:#666;letter-spacing:0.603px;">2019</span>
<span class="t" style="left:1215.70px;top:875.00px;font-size:12px;line-height:15px;color:#666;letter-spacing:0.603px;">2020</span>
<span class="t" style="left:1426.22px;top:875.00px;font-size:12px;line-height:15px;color:#666;letter-spacing:0.603px;">2021</span>
<span class="t" style="left:1636.17px;top:875.00px;font-size:12px;line-height:15px;color:#666;letter-spacing:0.603px;">2022</span>
<span class="t" style="left:1846.12px;top:875.00px;font-size:12px;line-height:15px;color:#666;letter-spacing:0.603px;">2023</span>
<div class="b" style="left:277px;top:908px;width:1618px;height:30.5px;background:#e6e6e6;border-top:1px solid #cfcfcf;"></div>
<div class="b" style="left:277px;top:938px;width:1618px;height:18px;background:#ebebeb;border-top:1px solid #d2d2d2;"></div>
<div class="b" style="left:277px;top:956px;width:1618px;height:6px;background:#fff;border-radius:0 0 8px 8px;"></div>
<div class="b" style="left:362px;top:909px;width:1px;height:29px;background:#cfcfcf;"></div>
<div class="b" style="left:363px;top:909px;width:116px;height:29.5px;background:#fafafa;"></div>
<div class="b" style="left:479px;top:909px;width:1px;height:29px;background:#cfcfcf;"></div>
<div class="b" style="left:511px;top:909px;width:1px;height:29px;background:#cfcfcf;"></div>
<div class="b" style="left:543px;top:909px;width:1px;height:29px;background:#cfcfcf;"></div>
<div class="b" style="left:575px;top:909px;width:1px;height:29px;background:#cfcfcf;"></div>
<svg class="b" style="left:286px;top:915px;" width="14" height="14" viewBox="0 0 14 14"><g fill="none" stroke="#666" stroke-width="1"><rect x="1.2" y="1.2" width="10.4" height="10.4"/><line x1="6.4" y1="1.2" x2="6.4" y2="11.6"/><line x1="1.2" y1="6.4" x2="11.6" y2="6.4"/></g></svg>
<span class="t" style="left:304.40px;top:915.00px;font-size:12px;line-height:15px;color:#666;letter-spacing:0.142px;">Overview</span>
<span class="t" style="left:370.00px;top:915.00px;font-size:12px;line-height:15px;color:#222;letter-spacing:0.288px;-webkit-text-stroke:0.45px #222;">Sales by Segment</span>
<svg class="b" style="left:488.6px;top:913.3px;" width="20" height="20" viewBox="0 0 20 20"><path d="M8.6,12.4 H1.8 V3 H12.8 V8.8" fill="none" stroke="#4a4a4a" stroke-width="1.3"/><g stroke="#4a4a4a" stroke-width="1.2"><line x1="5" y1="7" x2="5" y2="10"/><line x1="7.4" y1="5.2" x2="7.4" y2="10"/><line x1="9.8" y1="7.8" x2="9.8" y2="10"/></g><g stroke="#3c3c3c" stroke-width="1.7"><line x1="9.4" y1="13.6" x2="16.2" y2="13.6"/><line x1="12.8" y1="10.2" x2="12.8" y2="17"/></g></svg>
<svg class="b" style="left:520.6px;top:913.3px;" width="20" height="20" viewBox="0 0 20 20"><path d="M8.6,12.4 H1.8 V3 H12.8 V8.8 M1.8,7.6 H12.8 M7.2,3 V12.4" fill="none" stroke="#4a4a4a" stroke-width="1.3"/><g stroke="#3c3c3c" stroke-width="1.7"><line x1="9.4" y1="13.6" x2="16.2" y2="13.6"/><line x1="12.8" y1="10.2" x2="12.8" y2="17"/></g></svg>
<svg class="b" style="left:552.6px;top:913.3px;" width="20" height="20" viewBox="0 0 20 20"><path d="M7,13.2 L1.8,11.4 V3 L7,4.8 Z M7,4.8 L12.4,3 V8.8" fill="none" stroke="#4a4a4a" stroke-width="1.3"/><g stroke="#3c3c3c" stroke-width="1.7"><line x1="9.4" y1="13.6" x2="16.2" y2="13.6"/><line x1="12.8" y1="10.2" x2="12.8" y2="17"/></g></svg>
<span class="t" style="left:287.00px;top:940.00px;font-size:11px;line-height:14px;color:#2a2a2a;letter-spacing:-0.244px;-webkit-text-stroke:0.2px #2a2a2a;">282 marks</span>
<span class="t" style="left:349.00px;top:940.00px;font-size:11px;line-height:14px;color:#2a2a2a;letter-spacing:-0.374px;-webkit-text-stroke:0.2px #2a2a2a;">3 rows by 1 column</span>
<span class="t" style="left:449.60px;top:940.00px;font-size:11px;line-height:14px;color:#2a2a2a;letter-spacing:-0.402px;-webkit-text-stroke:0.2px #2a2a2a;">SUM(Sales): $2,297,201</span>
<div class="b" style="left:697px;top:183px;width:124.5px;height:21px;background:rgba(0,0,0,0.10);border-radius:10.5px;filter:blur(1.5px);"></div>
<div class="b" style="left:695.3px;top:179.4px;width:123.7px;height:21.2px;background:rgba(51,152,190,0.8);border-radius:10.6px;border:1px solid rgba(40,130,165,0.3);"></div>
<span class="t" style="left:706.00px;top:183.00px;font-size:12px;line-height:15px;color:#fff;letter-spacing:0.416px;-webkit-text-stroke:0.45px #fff;">Category</span>
</div></body></html>
